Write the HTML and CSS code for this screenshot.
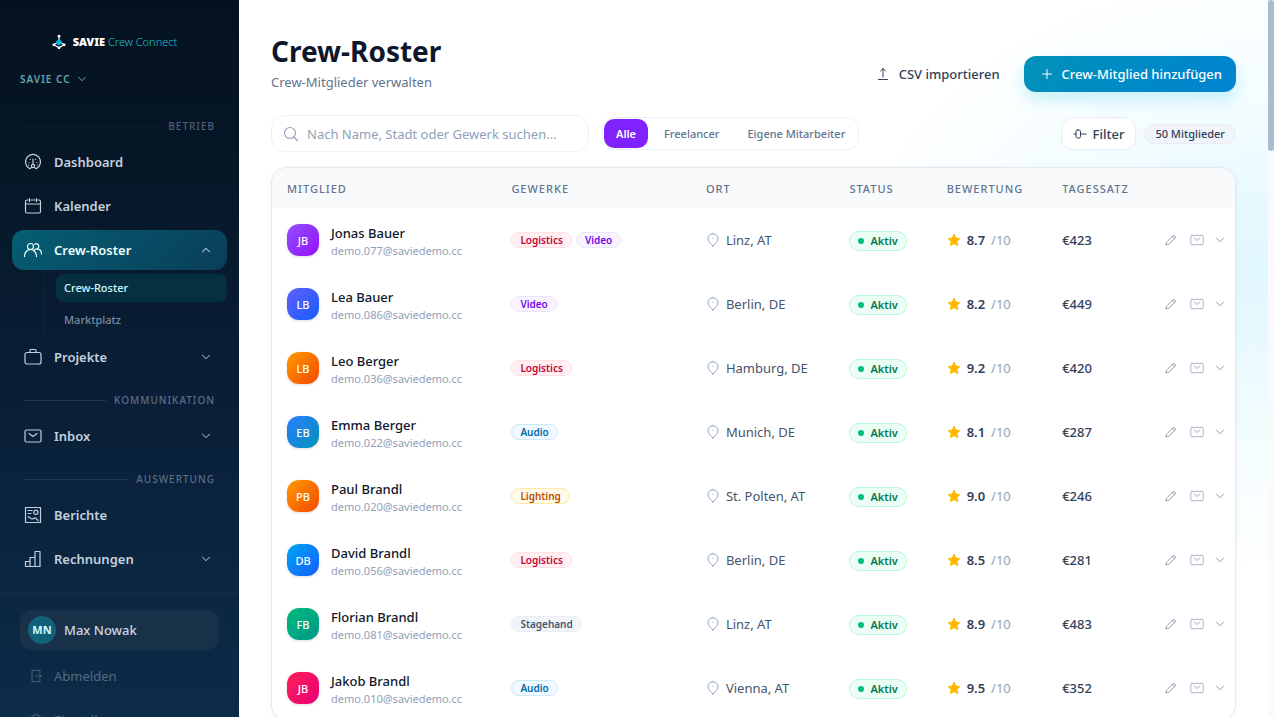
FILE: index.html
```html
<!DOCTYPE html>
<html lang="de">
<head>
<meta charset="utf-8">
<meta name="viewport" content="width=device-width, initial-scale=1">
<title>Crew-Roster</title>
<link rel="stylesheet" href="styles.css">
</head>
<body>
<svg class="sprite" aria-hidden="true">
  <symbol id="down" viewBox="0 0 12 12"><path d="M2.500 4.200L6 7.700l3.500-3.500"/></symbol>
  <symbol id="up" viewBox="0 0 12 12"><path d="M2.500 7.800L6 4.300l3.500 3.500"/></symbol>
  <symbol id="gauge" viewBox="0 0 18 18"><path d="M5.500 15.500a7.500 7.500 0 1 1 7 0c-1 .5-1.500-.5-2-1.500M5.500 15.500c1 .5 1.500-.5 2-1.500"/><circle cx="9" cy="13" r="1.600"/><path d="M9 11.400V6M5 9.500v.1M6.300 6.300v.1M11.700 6.300v.1M13 9.500v.1M4.600 12v.1M13.400 12v.1"/></symbol>
  <symbol id="calendar" viewBox="0 0 18 18"><path d="M4 3H3a1.500 1.500 0 0 0-1.500 1.500v10A1.500 1.500 0 0 0 3 16h12a1.500 1.500 0 0 0 1.500-1.500v-10A1.500 1.500 0 0 0 15 3h-1M7 3h4M5.500 1.500v3M12.500 1.500v3M1.500 7h15"/></symbol>
  <symbol id="people" viewBox="0 0 18 18"><circle cx="6.500" cy="5.500" r="3"/><path d="M.5 15.500c0-4 2.500-7 6-7s6 3 6 7M10.700 3.200a2.600 2.600 0 1 1 2.300 4.600c2.800.2 4.500 2.200 4.500 5.200M10.500 8.800c.7-.6 1.500-1 2.500-1"/></symbol>
  <symbol id="case" viewBox="0 0 18 18"><rect x="1" y="4.500" width="16" height="11.500" rx="2"/><path d="M6 4.500v-2a1 1 0 0 1 1-1h4a1 1 0 0 1 1 1v2"/></symbol>
  <symbol id="mail" viewBox="0 0 18 18"><rect x="1" y="3" width="16" height="12" rx="1.500"/><path d="M5 6.500l4 3 4-3"/></symbol>
  <symbol id="report" viewBox="0 0 18 18"><rect x="1.500" y="1.500" width="15" height="15"/><path d="M4 4.500h4M4 7.500h3M4 11c2-.5 2 2 4 2s2-2 3.500-1L14 14.500"/><circle cx="11.800" cy="6.300" r="2.100"/></symbol>
  <symbol id="bars" viewBox="0 0 18 18"><path d="M1.500 16.500v-5H6v5zM6 16.500v-9h5v9zM11 16.500v-15h5v15z"/></symbol>
  <symbol id="exit" viewBox="0 0 16 16"><path d="M12.500 4V1.500h-9v13h9V12M7.500 8h6M11.500 5.500L14 8l-2.500 2.500"/></symbol>
  <symbol id="gear" viewBox="0 0 16 16"><circle cx="8" cy="8" r="2.500"/><path d="M6.500 1.500h3l.6 2 2-.4 1.700 2.600L12.600 8l1.200 2.300-1.700 2.600-2-.4-.6 2h-3l-.6-2-2 .4-1.700-2.600L3.400 8 2.200 5.700l1.700-2.600 2 .4z"/></symbol>
  <symbol id="search" viewBox="0 0 16 16"><circle cx="7" cy="7" r="5.500"/><path d="M11 11l3.500 3.500"/></symbol>
  <symbol id="upload" viewBox="0 0 14 14"><path d="M7 10V1.500M4.500 4L7 1.500 9.500 4M2.500 12.500h9"/></symbol>
  <symbol id="plus" viewBox="0 0 12 12"><path d="M6 1.500v9M1.500 6h9"/></symbol>
  <symbol id="filter" viewBox="0 0 14 14"><path d="M1 7h2M7.500 7H13"/><rect x="3" y="3" width="4.500" height="8" rx="1.500"/></symbol>
  <symbol id="pin" viewBox="0 0 14 14"><path d="M7 13C4.500 10.500 2 8.300 2 5.700a5 5 0 0 1 10 0C12 8.300 9.500 10.500 7 13z"/><path d="M7 5.600v.2"/></symbol>
  <symbol id="star" viewBox="0 0 14 14"><path d="M7 1.300l1.800 3.700 4 .6-2.900 2.900.7 4L7 10.600l-3.600 1.900.7-4L1.200 5.600l4-.6z"/></symbol>
  <symbol id="pen" viewBox="0 0 12 12"><path d="M1.300 10.700c-.2-1.200 0-2.200.9-3.100L8 1.800a1.600 1.600 0 0 1 2.200 2.200L4.400 9.800c-.9.900-1.900 1.100-3.100.9zM7.200 2.600l2.200 2.200"/></symbol>
</svg>

<div class="shell">
  <aside class="sidebar">
    <a class="brand" href="#">
      <svg class="logo" viewBox="0 0 14 16" aria-hidden="true"><path d="M7 2.500V6M4.500 9L1.800 10.800 7 13.800l5.200-3L9.500 9" fill="none" stroke="#fff" stroke-width="1.300"/><path d="M7 4.500l3 3.200v2L7 11.500 4 9.700v-2z" fill="#12b5e0"/><circle cx="7" cy="2.200" r="1.400" fill="#fff"/><circle cx="1.800" cy="10.800" r="1.400" fill="#fff"/><circle cx="12.200" cy="10.800" r="1.400" fill="#fff"/><circle cx="7" cy="13.800" r="1.400" fill="#fff"/></svg>
      <span class="brand-name"><strong>SAVIE</strong> Crew Connect</span>
    </a>
    <button class="workspace" type="button">SAVIE CC <svg class="i12"><use href="#down"/></svg></button>
    <nav class="nav">
      <h2 class="section faint">BETRIEB</h2>
      <a class="item" href="#"><svg class="i18"><use href="#gauge"/></svg>Dashboard</a>
      <a class="item" href="#"><svg class="i18"><use href="#calendar"/></svg>Kalender</a>
      <a class="item current" href="#"><svg class="i18"><use href="#people"/></svg>Crew-Roster<svg class="i12 caret"><use href="#up"/></svg></a>
      <div class="subnav">
        <a class="subitem selected" href="#">Crew-Roster</a>
        <a class="subitem" href="#">Marktplatz</a>
      </div>
      <a class="item" href="#"><svg class="i18"><use href="#case"/></svg>Projekte<svg class="i12 caret"><use href="#down"/></svg></a>
      <h2 class="section">KOMMUNIKATION</h2>
      <a class="item" href="#"><svg class="i18"><use href="#mail"/></svg>Inbox<svg class="i12 caret"><use href="#down"/></svg></a>
      <h2 class="section">AUSWERTUNG</h2>
      <a class="item" href="#"><svg class="i18"><use href="#report"/></svg>Berichte</a>
      <a class="item" href="#"><svg class="i18"><use href="#bars"/></svg>Rechnungen<svg class="i12 caret"><use href="#down"/></svg></a>
    </nav>
    <div class="account">
      <a class="user" href="#"><span class="user-badge">MN</span>Max Nowak</a>
      <a class="util" href="#"><svg class="i14"><use href="#exit"/></svg>Abmelden</a>
      <a class="util" href="#"><svg class="i14"><use href="#gear"/></svg>Einstellungen</a>
    </div>
  </aside>

  <main class="main">
    <header class="page-head">
      <div>
        <h1 class="title">Crew-Roster</h1>
        <p class="subtitle">Crew-Mitglieder verwalten</p>
      </div>
      <div class="actions">
        <button class="ghost" type="button"><svg class="i14"><use href="#upload"/></svg>CSV importieren</button>
        <button class="primary" type="button"><svg class="i12"><use href="#plus"/></svg>Crew-Mitglied hinzufügen</button>
      </div>
    </header>

    <div class="toolbar">
      <label class="search"><svg class="i16"><use href="#search"/></svg><input type="text" aria-label="Suche" placeholder="Nach Name, Stadt oder Gewerk suchen..."></label>
      <div class="segments">
        <button class="segment on" type="button">Alle</button>
        <button class="segment" type="button">Freelancer</button>
        <button class="segment" type="button">Eigene Mitarbeiter</button>
      </div>
      <button class="filter" type="button"><svg class="i14"><use href="#filter"/></svg>Filter</button>
      <span class="count">50 Mitglieder</span>
    </div>

    <div class="card">
      <table class="roster">
        <colgroup><col class="c-member"><col class="c-trade"><col class="c-place"><col class="c-status"><col class="c-rating"><col class="c-rate"><col></colgroup>
        <thead><tr><th>MITGLIED</th><th>GEWERKE</th><th>ORT</th><th>STATUS</th><th>BEWERTUNG</th><th>TAGESSATZ</th><th></th></tr></thead>
        <tbody>
          <tr>
            <td><div class="member"><span class="avatar violet">JB</span><div class="who"><div class="name">Jonas Bauer</div><div class="email">demo.077@saviedemo.cc</div></div></div></td>
            <td><div class="tags"><span class="tag rose">Logistics</span><span class="tag purple">Video</span></div></td>
            <td><div class="place"><svg class="i14"><use href="#pin"/></svg>Linz, AT</div></td>
            <td><span class="status">Aktiv</span></td>
            <td><div class="rating"><svg class="i14 star"><use href="#star"/></svg><b>8.7</b><span>/10</span></div></td>
            <td class="rate">€423</td>
            <td><div class="row-actions"><button type="button" aria-label="Bearbeiten"><svg class="i12"><use href="#pen"/></svg></button><button type="button" aria-label="Nachricht"><svg class="i14"><use href="#mail"/></svg></button><button type="button" aria-label="Details"><svg class="i12"><use href="#down"/></svg></button></div></td>
          </tr>
          <tr>
            <td><div class="member"><span class="avatar indigo">LB</span><div class="who"><div class="name">Lea Bauer</div><div class="email">demo.086@saviedemo.cc</div></div></div></td>
            <td><div class="tags"><span class="tag purple">Video</span></div></td>
            <td><div class="place"><svg class="i14"><use href="#pin"/></svg>Berlin, DE</div></td>
            <td><span class="status">Aktiv</span></td>
            <td><div class="rating"><svg class="i14 star"><use href="#star"/></svg><b>8.2</b><span>/10</span></div></td>
            <td class="rate">€449</td>
            <td><div class="row-actions"><button type="button" aria-label="Bearbeiten"><svg class="i12"><use href="#pen"/></svg></button><button type="button" aria-label="Nachricht"><svg class="i14"><use href="#mail"/></svg></button><button type="button" aria-label="Details"><svg class="i12"><use href="#down"/></svg></button></div></td>
          </tr>
          <tr>
            <td><div class="member"><span class="avatar orange">LB</span><div class="who"><div class="name">Leo Berger</div><div class="email">demo.036@saviedemo.cc</div></div></div></td>
            <td><div class="tags"><span class="tag rose">Logistics</span></div></td>
            <td><div class="place"><svg class="i14"><use href="#pin"/></svg>Hamburg, DE</div></td>
            <td><span class="status">Aktiv</span></td>
            <td><div class="rating"><svg class="i14 star"><use href="#star"/></svg><b>9.2</b><span>/10</span></div></td>
            <td class="rate">€420</td>
            <td><div class="row-actions"><button type="button" aria-label="Bearbeiten"><svg class="i12"><use href="#pen"/></svg></button><button type="button" aria-label="Nachricht"><svg class="i14"><use href="#mail"/></svg></button><button type="button" aria-label="Details"><svg class="i12"><use href="#down"/></svg></button></div></td>
          </tr>
          <tr>
            <td><div class="member"><span class="avatar cyan">EB</span><div class="who"><div class="name">Emma Berger</div><div class="email">demo.022@saviedemo.cc</div></div></div></td>
            <td><div class="tags"><span class="tag sky">Audio</span></div></td>
            <td><div class="place"><svg class="i14"><use href="#pin"/></svg>Munich, DE</div></td>
            <td><span class="status">Aktiv</span></td>
            <td><div class="rating"><svg class="i14 star"><use href="#star"/></svg><b>8.1</b><span>/10</span></div></td>
            <td class="rate">€287</td>
            <td><div class="row-actions"><button type="button" aria-label="Bearbeiten"><svg class="i12"><use href="#pen"/></svg></button><button type="button" aria-label="Nachricht"><svg class="i14"><use href="#mail"/></svg></button><button type="button" aria-label="Details"><svg class="i12"><use href="#down"/></svg></button></div></td>
          </tr>
          <tr>
            <td><div class="member"><span class="avatar orange">PB</span><div class="who"><div class="name">Paul Brandl</div><div class="email">demo.020@saviedemo.cc</div></div></div></td>
            <td><div class="tags"><span class="tag amber">Lighting</span></div></td>
            <td><div class="place"><svg class="i14"><use href="#pin"/></svg>St. Polten, AT</div></td>
            <td><span class="status">Aktiv</span></td>
            <td><div class="rating"><svg class="i14 star"><use href="#star"/></svg><b>9.0</b><span>/10</span></div></td>
            <td class="rate">€246</td>
            <td><div class="row-actions"><button type="button" aria-label="Bearbeiten"><svg class="i12"><use href="#pen"/></svg></button><button type="button" aria-label="Nachricht"><svg class="i14"><use href="#mail"/></svg></button><button type="button" aria-label="Details"><svg class="i12"><use href="#down"/></svg></button></div></td>
          </tr>
          <tr>
            <td><div class="member"><span class="avatar blue">DB</span><div class="who"><div class="name">David Brandl</div><div class="email">demo.056@saviedemo.cc</div></div></div></td>
            <td><div class="tags"><span class="tag rose">Logistics</span></div></td>
            <td><div class="place"><svg class="i14"><use href="#pin"/></svg>Berlin, DE</div></td>
            <td><span class="status">Aktiv</span></td>
            <td><div class="rating"><svg class="i14 star"><use href="#star"/></svg><b>8.5</b><span>/10</span></div></td>
            <td class="rate">€281</td>
            <td><div class="row-actions"><button type="button" aria-label="Bearbeiten"><svg class="i12"><use href="#pen"/></svg></button><button type="button" aria-label="Nachricht"><svg class="i14"><use href="#mail"/></svg></button><button type="button" aria-label="Details"><svg class="i12"><use href="#down"/></svg></button></div></td>
          </tr>
          <tr>
            <td><div class="member"><span class="avatar green">FB</span><div class="who"><div class="name">Florian Brandl</div><div class="email">demo.081@saviedemo.cc</div></div></div></td>
            <td><div class="tags"><span class="tag slate">Stagehand</span></div></td>
            <td><div class="place"><svg class="i14"><use href="#pin"/></svg>Linz, AT</div></td>
            <td><span class="status">Aktiv</span></td>
            <td><div class="rating"><svg class="i14 star"><use href="#star"/></svg><b>8.9</b><span>/10</span></div></td>
            <td class="rate">€483</td>
            <td><div class="row-actions"><button type="button" aria-label="Bearbeiten"><svg class="i12"><use href="#pen"/></svg></button><button type="button" aria-label="Nachricht"><svg class="i14"><use href="#mail"/></svg></button><button type="button" aria-label="Details"><svg class="i12"><use href="#down"/></svg></button></div></td>
          </tr>
          <tr>
            <td><div class="member"><span class="avatar pink">JB</span><div class="who"><div class="name">Jakob Brandl</div><div class="email">demo.010@saviedemo.cc</div></div></div></td>
            <td><div class="tags"><span class="tag sky">Audio</span></div></td>
            <td><div class="place"><svg class="i14"><use href="#pin"/></svg>Vienna, AT</div></td>
            <td><span class="status">Aktiv</span></td>
            <td><div class="rating"><svg class="i14 star"><use href="#star"/></svg><b>9.5</b><span>/10</span></div></td>
            <td class="rate">€352</td>
            <td><div class="row-actions"><button type="button" aria-label="Bearbeiten"><svg class="i12"><use href="#pen"/></svg></button><button type="button" aria-label="Nachricht"><svg class="i14"><use href="#mail"/></svg></button><button type="button" aria-label="Details"><svg class="i12"><use href="#down"/></svg></button></div></td>
          </tr>
        </tbody>
      </table>
    </div>
  </main>
  <div class="scroll-track"><div class="scroll-thumb"></div></div>
</div>
</body>
</html>
```
FILE: styles.css
```css
* { box-sizing: border-box; }
body { margin: 0; font-family: "Noto Sans", "Open Sans", sans-serif; font-size: 13px; line-height: 20px; color: #314158; background: #fff; }
h1, h2, p { margin: 0; }
a { color: inherit; text-decoration: none; }
button { font: inherit; color: inherit; background: none; border: 0; padding: 0; cursor: pointer; }
svg { flex: none; fill: none; stroke: currentColor; stroke-width: 1.2; stroke-linecap: round; stroke-linejoin: round; }
.sprite { position: absolute; width: 0; height: 0; }
.i12 { width: 12px; height: 12px; stroke-width: 1; }
.i14 { width: 14px; height: 14px; stroke-width: 1; }
.i16 { width: 16px; height: 16px; }
.i18 { width: 18px; height: 18px; }

.shell { display: flex; height: 100vh; overflow: hidden; }

.sidebar { flex: none; width: 239px; overflow: hidden; background: linear-gradient(180deg, #041120 0%, #071728 25%, #0a2039 60%, #0c2c48 100%); }
.brand { display: flex; align-items: center; justify-content: center; gap: 7px; height: 20px; margin-top: 32px; padding-right: 10px; font-size: 11px; font-weight: 300; color: #1fc3cf; }
.brand strong { color: #fff; font-weight: 900; }
.logo { width: 14px; height: 16px; stroke: none; }
.workspace { display: flex; align-items: center; gap: 5px; margin: 17px 0 0 20px; font-size: 10px; font-weight: 600; letter-spacing: 1px; color: #64a5ae; }
.nav { padding: 19px 12px 0; }
.section { display: flex; align-items: center; gap: 8px; height: 39px; padding: 7px 12px 0; font-size: 10px; font-weight: 500; letter-spacing: 1px; color: #5b6e85; }
.section::before { content: ""; flex: 1; height: 1px; background: #1d3850; }
.faint { height: 34px; padding-top: 2px; color: #4f6176; }
.faint::before { background: #0d2032; }
.item { display: flex; align-items: center; gap: 12px; height: 40px; padding: 0 12px; border-radius: 12px; font-weight: 600; color: #c4d0de; }
.item + .item { margin-top: 4px; }
.caret { margin-left: auto; margin-right: 3px; }
.current { color: #ecfeff; background: linear-gradient(135deg, #055e72, #0a3e5a); }
.subnav { display: flex; flex-direction: column; gap: 4px; margin-left: 32px; padding: 4px 0 3px 11px; border-left: 1px solid #0d2539; }
.subitem { height: 28px; padding: 0 8px; border-radius: 8px; font-size: 11px; line-height: 28px; font-weight: 500; color: #7b8b9f; }
.selected { color: #cefafe; background: #072f42; }
.account { margin-top: 14px; padding: 16px 20px; border-top: 1px solid #15304a; }
.user { display: flex; align-items: center; gap: 8px; height: 40px; padding: 0 8px; border-radius: 12px; font-weight: 500; color: #cad5e2; background: #183149; }
.user-badge { flex: none; width: 28px; height: 28px; border-radius: 50%; font-size: 11px; font-weight: 700; line-height: 28px; text-align: center; color: #cefafe; background: #11617a; }
.util { display: flex; align-items: center; gap: 11px; height: 36px; margin-top: 8px; padding-left: 9px; color: #536a84; }

.main { flex: 1; min-width: 0; overflow: hidden; padding: 33px 32px 0; background: radial-gradient(ellipse 420px 300px at 100% 270px, #e0f7fe 0%, #f0fcff 45%, #fff 100%); }
.page-head { display: flex; align-items: center; justify-content: space-between; }
.title { font-size: 28px; line-height: 36px; font-weight: 700; color: #0f172b; }
.subtitle { margin-top: 3px; color: #62748e; }
.actions { display: flex; align-items: center; gap: 24px; padding-top: 23px; font-weight: 500; }
.ghost { display: flex; align-items: center; gap: 9px; }
.primary { display: flex; align-items: center; gap: 9px; height: 36px; padding: 0 14px 0 17px; border-radius: 12px; color: #fff; background: linear-gradient(135deg, #0092b8, #0084d1); box-shadow: 0 8px 16px #00b8db33; }
.toolbar { display: flex; align-items: center; margin: 23px 0 15px; }
.search { display: flex; align-items: center; gap: 8px; width: 318px; height: 37px; padding: 0 11px; border: 1px solid #edf1f6; border-radius: 14px; color: #90a1b9; background: #fff; }
.search input { flex: 1; min-width: 0; padding: 0; border: 0; outline: 0; font: inherit; color: #314158; background: none; }
.search input::placeholder { color: #90a1b9; }
.segments { display: flex; gap: 4px; height: 33px; margin-left: 13px; padding: 1px; border: 1px solid #edf1f6; border-radius: 12px; background: #fff; }
.segment { padding: 0 12px; border-radius: 10px; font-size: 11px; font-weight: 500; color: #62748e; }
.on { color: #fff; font-weight: 600; background: #7f22fe; }
.filter { display: flex; align-items: center; gap: 6px; height: 33px; margin-left: auto; padding: 0 11px; border: 1px solid #e8edf3; border-radius: 12px; font-weight: 500; background: #fff; }
.count { margin-left: 8px; padding: 0 10px; border: 1px solid #e9edf3; border-radius: 10px; font-size: 11px; line-height: 18px; font-weight: 500; background: #f1f5f9; }

.card { overflow: hidden; border: 1px solid #e2e8f0; border-radius: 16px; background: #fff; box-shadow: 0 1px 6px #0f172b0d; }
.roster { width: 100%; border-collapse: collapse; table-layout: fixed; }
.c-member { width: 23.3%; }
.c-trade { width: 20.2%; }
.c-place { width: 14.9%; }
.c-status { width: 10.1%; }
.c-rating { width: 12%; }
.c-rate { width: 10%; }
.roster th { height: 40px; padding: 2px 15px 0; font-size: 11px; font-weight: 500; letter-spacing: 1px; text-align: left; color: #62748e; background: #f8fafc; }
.roster td { height: 64px; padding: 0 15px; white-space: nowrap; }
.roster td:last-child { padding-right: 9px; }
.member { display: flex; align-items: center; gap: 12px; }
.avatar { flex: none; width: 32px; height: 32px; border-radius: 12px; font-size: 11px; font-weight: 500; line-height: 34px; text-align: center; color: #fff; box-shadow: 0 1px 3px #0f172b26; }
.violet { background: linear-gradient(135deg, #8e51ff, #9810fa); }
.indigo { background: linear-gradient(135deg, #615fff, #155dfc); }
.orange { background: linear-gradient(135deg, #fe9a00, #f54900); }
.cyan { background: linear-gradient(135deg, #2b7fff, #0092b8); }
.blue { background: linear-gradient(135deg, #00a6f4, #155dfc); }
.green { background: linear-gradient(135deg, #00bc7d, #009689); }
.pink { background: linear-gradient(135deg, #ff2056, #e60076); }
.who { padding-top: 4px; }
.name { line-height: 18px; font-weight: 500; color: #0f172b; }
.email { font-size: 11px; line-height: 18px; color: #90a1b9; }
.tags { display: flex; gap: 4px; }
.tag { padding: 0 8px; border: 1px solid; border-radius: 8px; font-size: 10px; line-height: 14px; font-weight: 600; }
.rose { color: #c70036; background: #fff1f2; border-color: #ffdfe2; }
.purple { color: #7008e7; background: #f8f4ff; border-color: #ece4ff; }
.sky { color: #0069a8; background: #f0f9ff; border-color: #c9ebfd; }
.amber { color: #bb4d00; background: #fffbeb; border-color: #fee9a5; }
.slate { color: #45556c; background: #f1f5f9; border-color: #eaeff5; }
.place { display: flex; align-items: center; gap: 6px; color: #45556c; }
.place svg { color: #90a1b9; }
.status { display: inline-flex; align-items: center; gap: 6px; height: 20px; padding: 0 8px; border: 1px solid #b9f5d8; border-radius: 10px; font-size: 11px; font-weight: 600; color: #007a55; background: #ecfdf5; }
.status::before { content: ""; width: 6px; height: 6px; border-radius: 50%; background: #00bc7d; }
.rating { display: flex; align-items: center; gap: 6px; color: #90a1b9; }
.rating b { font-weight: 600; color: #314158; }
.star { fill: #ffb900; stroke: #ffb900; }
.rate { font-weight: 500; }
.row-actions { display: flex; align-items: center; justify-content: flex-end; gap: 13px; color: #90a1b9; }
.row-actions button { display: flex; }
.row-actions button:last-child { margin-left: -3px; }

.scroll-track { flex: none; width: 6px; background: #f8fafc; }
.scroll-thumb { height: 21vh; border-radius: 3px; background: #a8bbd0; }
```
